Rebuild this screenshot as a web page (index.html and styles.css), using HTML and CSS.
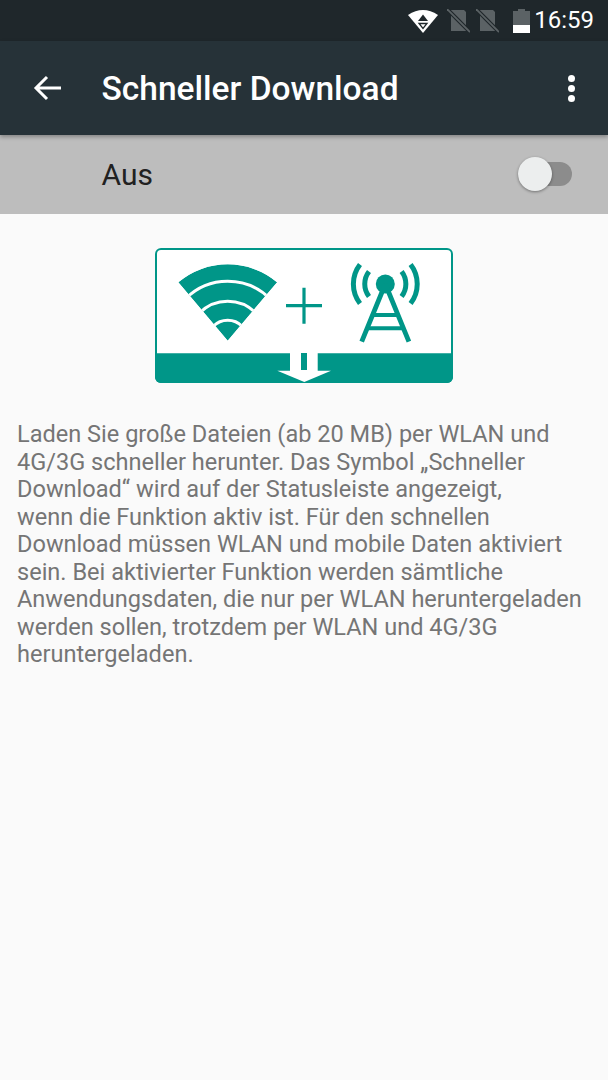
FILE: index.html
```html
<!DOCTYPE html>
<html lang="de">
<head>
<meta charset="utf-8">
<title>Schneller Download</title>
<link rel="stylesheet" href="styles.css">
</head>
<body>
<div class="status">
  <svg class="st-wifi" width="30" height="24" viewBox="0 0 30 24"><path d="M0 6Q15-4 30 6L15 24Z" fill="#fff"/><path d="M15 5.500l5 6.500H10Z" fill="#1f272b"/><path d="M11 14.500h8L15 19.500Z" fill="none" stroke="#1f272b" stroke-width="1.300"/></svg>
  <svg class="st-sim" width="23" height="24" viewBox="0 0 23 24"><path d="M4 1h13l2 2v19H4Z" fill="#5b6265"/><path d="M0 0 23 23" stroke="#1f272b" stroke-width="4"/><path d="M0 0 23 23" stroke="#5b6265" stroke-width="1.800"/></svg>
  <svg class="st-sim st-sim-last" width="23" height="24" viewBox="0 0 23 24"><path d="M4 1h13l2 2v19H4Z" fill="#5b6265"/><path d="M0 0 23 23" stroke="#1f272b" stroke-width="4"/><path d="M0 0 23 23" stroke="#5b6265" stroke-width="1.800"/></svg>
  <svg class="st-bat" width="17" height="24" viewBox="0 0 17 24"><path d="M5 0h7v2h5v22H0V2h5Z" fill="#5b6265"/><rect y="16" width="17" height="8" fill="#fff"/></svg>
  <span class="time">16:59</span>
</div>
<header class="appbar">
  <svg class="back" width="28" height="26" viewBox="0 0 28 26"><path d="M28 13H3M14 2 3 13l11 11" fill="none" stroke="#fff" stroke-width="3"/></svg>
  <h1 class="title">Schneller Download</h1>
  <div class="more"><i></i><i></i><i></i></div>
</header>
<section class="toggle-row">
  <span class="toggle-label">Aus</span>
  <div class="switch"><div class="thumb"></div></div>
</section>
<main class="content">
  <svg class="illus" width="298" height="135" viewBox="0 0 298 135">
    <defs>
      <clipPath id="fan"><path d="M72.700 92.700 23.300 34.300A76.700 76.700 0 0 1 122.100 34.300Z"/></clipPath>
    </defs>
    <rect x="1" y="1" width="296" height="133" rx="5" fill="#fff" stroke="#009688" stroke-width="2"/>
    <path d="M0 105.300H298V129a6 6 0 0 1-6 6H6a6 6 0 0 1-6-6Z" fill="#009688"/>
    <g clip-path="url(#fan)">
      <path d="M72.700 92.700 23.300 34.300A76.700 76.700 0 0 1 122.100 34.300Z" fill="#009688"/>
      <g fill="none" stroke="#fff" stroke-width="3">
        <circle cx="72.700" cy="92.700" r="59.500"/>
        <circle cx="72.700" cy="92.700" r="39.500"/>
        <circle cx="72.700" cy="92.700" r="20.500"/>
      </g>
    </g>
    <path d="M131 57.700h36M149 39.700v36" fill="none" stroke="#009688" stroke-width="3.200"/>
    <circle cx="230.300" cy="36" r="9.500" fill="#009688"/>
    <g fill="none" stroke="#009688">
      <path d="M230.300 36 206.700 93.700M230.300 36l23.600 57.700" stroke-width="4.800"/>
      <path d="M219 67h23M213.500 80.300h34" stroke-width="4"/>
      <path d="M214 23.500a20.500 20.500 0 0 0 0 25M246.600 23.500a20.500 20.500 0 0 1 0 25M205 16.500a32 32 0 0 0 0 39M255.600 16.500a32 32 0 0 1 0 39" stroke-width="5"/>
    </g>
    <rect x="135" y="105" width="27.700" height="18" fill="#fff"/>
    <rect x="146" y="105" width="6" height="17" fill="#009688"/>
    <path d="M122.300 122.700H176L149.300 134Z" fill="#fff"/>
  </svg>
  <p class="desc">Laden Sie große Dateien (ab 20 MB) per WLAN und<br>4G/3G schneller herunter. Das Symbol „Schneller<br>Download“ wird auf der Statusleiste angezeigt,<br>wenn die Funktion aktiv ist. Für den schnellen<br>Download müssen WLAN und mobile Daten aktiviert<br>sein. Bei aktivierter Funktion werden sämtliche<br>Anwendungsdaten, die nur per WLAN heruntergeladen<br>werden sollen, trotzdem per WLAN und 4G/3G<br>heruntergeladen.</p>
</main>
</body>
</html>
```
FILE: styles.css
```css
* { box-sizing: border-box; }
html, body { margin: 0; padding: 0; }
body {
  width: 608px;
  height: 1080px;
  overflow: hidden;
  background: #fafafa;
  font-family: Roboto, sans-serif;
  display: flex;
  flex-direction: column;
}
.status {
  height: 41px;
  flex: none;
  background: #1f272b;
  display: flex;
  align-items: center;
  justify-content: flex-end;
  padding-right: 14px;
}
.st-wifi { margin-right: 9px; }
.st-sim { margin-right: 6px; }
.st-sim-last { margin-right: 14px; }
.st-bat { margin-right: 4px; }
.time { color: #fff; font-size: 24px; line-height: 41px; }
.appbar {
  height: 94px;
  flex: none;
  background: #263238;
  display: flex;
  align-items: center;
  padding: 0 33px 0 33px;
  box-shadow: 0 2px 4px rgba(0,0,0,.3);
  position: relative;
  z-index: 1;
}
.back { flex: none; margin-right: 40.500px; }
.title {
  margin: 0;
  flex: 1;
  color: #fff;
  font-size: 33.500px;
  font-weight: 500;
}
.more { display: flex; flex-direction: column; gap: 3px; }
.more i { display: block; width: 7px; height: 7px; border-radius: 50%; background: #fff; }
.toggle-row {
  height: 79px;
  flex: none;
  background: #bdbdbd;
  display: flex;
  align-items: center;
  justify-content: space-between;
  padding: 0 36px 1px 101.500px;
}
.toggle-label { font-size: 30px; color: #212121; }
.switch {
  width: 54px;
  height: 24px;
  border-radius: 12px;
  background: #8c8c8c;
  display: flex;
  align-items: center;
}
.thumb {
  width: 34px;
  height: 34px;
  border-radius: 50%;
  background: #eceeee;
  box-shadow: 0 1px 3px rgba(0,0,0,.4);
}
.content {
  flex: 1;
  padding: 34px 17px 0;
  display: flex;
  flex-direction: column;
}
.illus { display: block; margin-left: 138px; flex: none; }
.desc {
  margin: 38px 0 0;
  font-size: 23.550px;
  line-height: 27.500px;
  color: #757575;
  white-space: nowrap;
}
```
